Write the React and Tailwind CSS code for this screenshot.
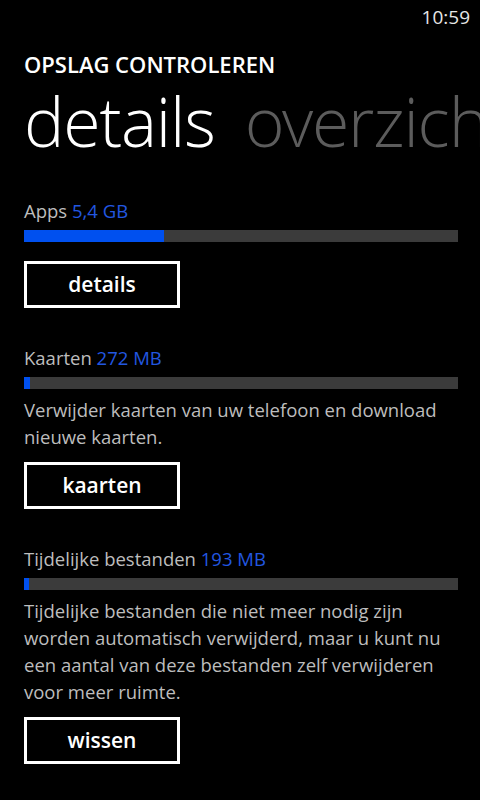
import React from 'react';

const FONT = { fontFamily: '"Open Sans", "Noto Sans", sans-serif' };
const LIGHT = { fontFamily: '"Open Sans Light", "Lato Light", "Open Sans", sans-serif', fontWeight: 300 };

const sections = [
  {
    label: 'Apps',
    size: '5,4 GB',
    pct: 32.3,
    button: 'details',
  },
  {
    label: 'Kaarten',
    size: '272 MB',
    pct: 1.4,
    text: 'Verwijder kaarten van uw telefoon en download nieuwe kaarten.',
    button: 'kaarten',
  },
  {
    label: 'Tijdelijke bestanden',
    size: '193 MB',
    pct: 1.2,
    text: 'Tijdelijke bestanden die niet meer nodig zijn worden automatisch verwijderd, maar u kunt nu een aantal van deze bestanden zelf verwijderen voor meer ruimte.',
    button: 'wissen',
  },
];

const StorageSection = ({ label, size, pct, text, button }) => (
  <div className="flex flex-col">
    <div className="text-[18.5px] leading-[24px] text-[#bdbdbd]">
      {label} <span className="text-[#2257e0]">{size}</span>
    </div>
    {/* balk */}
    <div className="mt-[7px] h-[12px] w-[434px] bg-[#3b3b3b]">
      <div className="h-full bg-[#0050ef]" style={{ width: `${pct}%` }} />
    </div>
    {text && (
      <p className="mt-[7px] w-[436px] text-[18.5px] leading-[27px] text-[#bdbdbd]">{text}</p>
    )}
    <button
      className={`${text ? 'mt-[12px]' : 'mt-[19px]'} flex h-[47px] w-[156px] items-center justify-center border-[3px] border-white text-[21px] font-semibold text-white`}
    >
      {button}
    </button>
  </div>
);

export default function App() {
  return (
    <div className="relative h-[800px] w-[480px] overflow-hidden bg-black" style={FONT}>
      {/* statusbalk */}
      <div className="flex h-[32px] justify-end pr-[10px] pt-[3px] text-[19px] text-[#e6e6e6]">10:59</div>

      <div className="pl-[24px]">
        <h1 className="mt-[18px] text-[22px] font-semibold leading-[28px] text-white">OPSLAG CONTROLEREN</h1>
        <div
          className="mt-[6px] flex gap-[30px] whitespace-nowrap text-[68px] leading-[74px] tracking-[-1.2px]"
          style={LIGHT}
        >
          <span className="text-white">details</span>
          <span className="text-[#5c5c5c]">overzicht</span>
        </div>

        <div className="mt-[41px] flex flex-col gap-[38px]">
          {sections.map((s) => (
            <StorageSection key={s.label} {...s} />
          ))}
        </div>
      </div>
    </div>
  );
}
